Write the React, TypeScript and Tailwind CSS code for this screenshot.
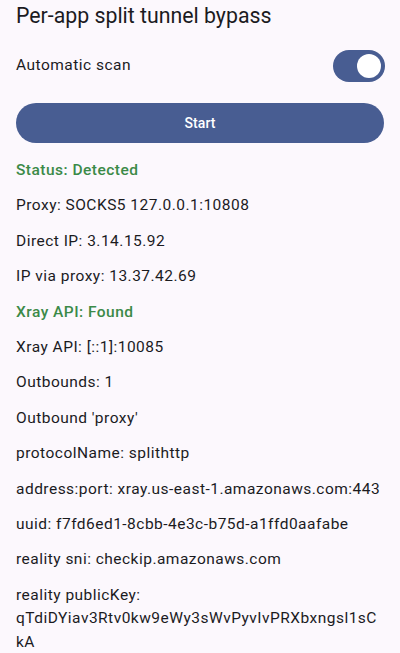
import { useState } from 'react'

const lines: { text: string; accent?: boolean }[] = [
  { text: 'Status: Detected', accent: true },
  { text: 'Proxy: SOCKS5 127.0.0.1:10808' },
  { text: 'Direct IP: 3.14.15.92' },
  { text: 'IP via proxy: 13.37.42.69' },
  { text: 'Xray API: Found', accent: true },
  { text: 'Xray API: [::1]:10085' },
  { text: 'Outbounds: 1' },
  { text: "Outbound 'proxy'" },
  { text: 'protocolName: splithttp' },
  { text: 'address:port: xray.us-east-1.amazonaws.com:443' },
  { text: 'uuid: f7fd6ed1-8cbb-4e3c-b75d-a1ffd0aafabe' },
  { text: 'reality sni: checkip.amazonaws.com' },
  { text: 'reality publicKey: qTdiDYiav3Rtv0kw9eWy3sWvPyvIvPRXbxngsl1sCkA' },
]

export default function App() {
  const [auto, setAuto] = useState(true)

  return (
    <div
      className="min-h-[653px] bg-[#fcf8fd] px-4 pt-[2px] text-[#1b1b1f] overflow-hidden"
      style={{ fontFamily: 'Roboto, "Noto Sans", sans-serif' }}
    >
      <h1 className="text-[21.3px] leading-[28px] font-normal">Per-app split tunnel bypass</h1>

      <div className="mt-[20px] flex items-center justify-between">
        <span className="text-[15.5px] tracking-[0.48px]">Automatic scan</span>
        <button
          onClick={() => setAuto(!auto)}
          className="relative w-[52px] h-[32px] rounded-full bg-[#485d92] mr-[-1px]"
        >
          <span className="absolute right-[4px] top-[4px] w-[24px] h-[24px] rounded-full bg-white" />
        </button>
      </div>

      <button className="mt-[21px] w-full h-[40px] rounded-full bg-[#485d92] text-white text-[14px] font-medium tracking-[0.1px]">
        Start
      </button>

      <div className="mt-[16px] flex flex-col gap-[11.8px]">
        {lines.map((l) => (
          <p
            key={l.text}
            className={
              'text-[15.5px] leading-[23.6px] tracking-[0.48px] break-words ' +
              (l.accent ? 'text-[#3b8a48] font-medium' : '')
            }
          >
            {l.text}
          </p>
        ))}
      </div>
    </div>
  )
}
